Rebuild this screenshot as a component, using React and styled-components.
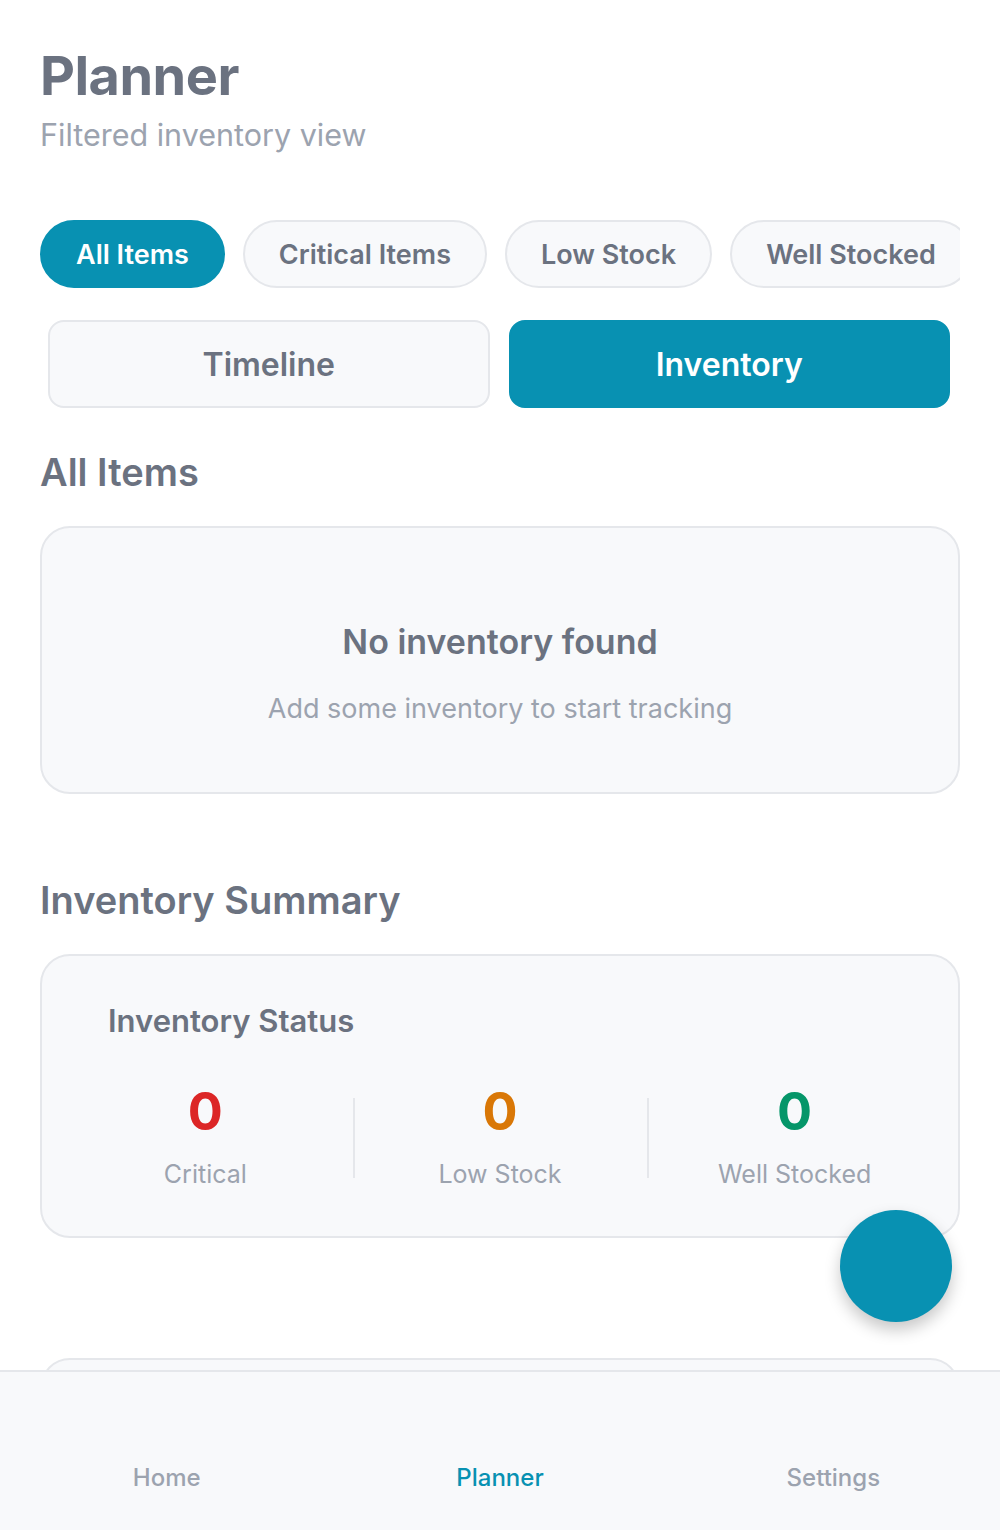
import React, { useState } from 'react'
import styled, { createGlobalStyle } from 'styled-components'

const GlobalStyle = createGlobalStyle`
  html, body {
    margin: 0;
    padding: 0;
    background: #ffffff;
    font-family: Inter, "Noto Sans", "Liberation Sans", sans-serif;
    overflow: hidden;
  }
  * { box-sizing: border-box; }
`

const teal = '#0891b2'

const Screen = styled.div`
  position: relative;
  width: 1000px;
  height: 1530px;
  overflow: hidden;
  background: #ffffff;
`

const Content = styled.main`
  padding: 44px 40px 0;
  display: flex;
  flex-direction: column;
`

const Title = styled.h1`
  margin: 0;
  font-size: 54px;
  font-weight: 700;
  color: #6b7280;
  letter-spacing: -0.5px;
  line-height: 1.2;
`

const Subtitle = styled.p`
  margin: 6px 0 0;
  font-size: 30.5px;
  color: #9ca3af;
  line-height: 1.3;
`

const ChipRow = styled.div`
  display: flex;
  gap: 18px;
  margin-top: 66px;
  width: 920px;
  overflow: hidden;
`

const Chip = styled.button`
  flex-shrink: 0;
  height: 68px;
  padding: 0 34px;
  border-radius: 34px;
  border: 2px solid ${p => (p.active ? teal : '#e5e7eb')};
  background: ${p => (p.active ? teal : '#f8f9fb')};
  color: ${p => (p.active ? '#ffffff' : '#6b7280')};
  font-family: inherit;
  font-size: 27px;
  font-weight: 600;
`

const Segments = styled.div`
  display: grid;
  grid-template-columns: 1fr 1fr;
  gap: 19px;
  padding: 0 10px 0 8px;
  margin-top: 32px;
`

const Segment = styled.button`
  height: 88px;
  border-radius: 16px;
  border: 2px solid ${p => (p.active ? teal : '#e5e7eb')};
  background: ${p => (p.active ? teal : '#f8f9fb')};
  color: ${p => (p.active ? '#ffffff' : '#6b7280')};
  font-family: inherit;
  font-size: 32px;
  font-weight: 600;
`

const SectionTitle = styled.h2`
  margin: ${p => p.top}px 0 0;
  font-size: 38px;
  font-weight: 600;
  color: #6b7280;
  line-height: 1.2;
`

const Card = styled.section`
  margin-top: 30px;
  border: 2px solid #e5e7eb;
  border-radius: 30px;
  background: #f8f9fb;
`

const EmptyCard = styled(Card)`
  height: 268px;
  padding-top: 26px;
  display: flex;
  flex-direction: column;
  align-items: center;
  justify-content: center;
  gap: 30px;
`

const EmptyTitle = styled.div`
  font-size: 34px;
  font-weight: 600;
  color: #6b7280;
`

const EmptyText = styled.div`
  font-size: 27px;
  color: #9ca3af;
`

const StatusCard = styled(Card)`
  height: 284px;
  padding: 46px 16px 0;
`

const StatusTitle = styled.h3`
  margin: 0 0 0 50px;
  font-size: 31px;
  font-weight: 600;
  color: #6b7280;
`

const Stats = styled.div`
  display: grid;
  grid-template-columns: repeat(3, 1fr);
  margin-top: 42px;
`

const Stat = styled.div`
  display: flex;
  flex-direction: column;
  align-items: center;
  gap: 16px;
  position: relative;
  & + &::before {
    content: '';
    position: absolute;
    left: 0;
    top: 17px;
    height: 80px;
    width: 2px;
    background: #e5e7eb;
  }
`

const StatValue = styled.div`
  font-size: 52px;
  font-weight: 700;
  color: ${p => p.color};
  line-height: 1.2;
`

const StatLabel = styled.div`
  font-size: 25px;
  color: #9ca3af;
`

const PeekCard = styled(Card)`
  margin-top: 120px;
  height: 160px;
`

const Fab = styled.button`
  position: absolute;
  left: 840px;
  top: 1210px;
  width: 112px;
  height: 112px;
  border-radius: 50%;
  border: none;
  background: ${teal};
  box-shadow: 0 8px 16px rgba(0, 0, 0, 0.22);
  z-index: 3;
`

const BottomNav = styled.nav`
  position: absolute;
  left: 0;
  right: 0;
  bottom: 0;
  height: 160px;
  background: #f8f9fb;
  border-top: 2px solid #e5e7eb;
  display: grid;
  grid-template-columns: repeat(3, 1fr);
  align-items: center;
  padding-top: 52px;
  z-index: 2;
`

const NavItem = styled.div`
  text-align: center;
  font-size: 24px;
  font-weight: 500;
  color: ${p => (p.active ? teal : '#9ca3af')};
`

const filters = ['All Items', 'Critical Items', 'Low Stock', 'Well Stocked']

export default function App() {
  const [filter, setFilter] = useState('All Items')
  const [view, setView] = useState('Inventory')

  return (
    <Screen>
      <GlobalStyle />
      <Content>
        <Title>Planner</Title>
        <Subtitle>Filtered inventory view</Subtitle>

        <ChipRow>
          {filters.map(f => (
            <Chip key={f} active={filter === f} onClick={() => setFilter(f)}>
              {f}
            </Chip>
          ))}
        </ChipRow>

        <Segments>
          {['Timeline', 'Inventory'].map(v => (
            <Segment key={v} active={view === v} onClick={() => setView(v)}>
              {v}
            </Segment>
          ))}
        </Segments>

        <SectionTitle top={42}>{filter}</SectionTitle>
        <EmptyCard>
          <EmptyTitle>No inventory found</EmptyTitle>
          <EmptyText>Add some inventory to start tracking</EmptyText>
        </EmptyCard>

        <SectionTitle top={84}>Inventory Summary</SectionTitle>
        <StatusCard>
          <StatusTitle>Inventory Status</StatusTitle>
          <Stats>
            <Stat>
              <StatValue color="#dc2626">0</StatValue>
              <StatLabel>Critical</StatLabel>
            </Stat>
            <Stat>
              <StatValue color="#d97706">0</StatValue>
              <StatLabel>Low Stock</StatLabel>
            </Stat>
            <Stat>
              <StatValue color="#059669">0</StatValue>
              <StatLabel>Well Stocked</StatLabel>
            </Stat>
          </Stats>
        </StatusCard>

        <PeekCard />
      </Content>

      <Fab aria-label="Add" />

      <BottomNav>
        <NavItem>Home</NavItem>
        <NavItem active>Planner</NavItem>
        <NavItem>Settings</NavItem>
      </BottomNav>
    </Screen>
  )
}
